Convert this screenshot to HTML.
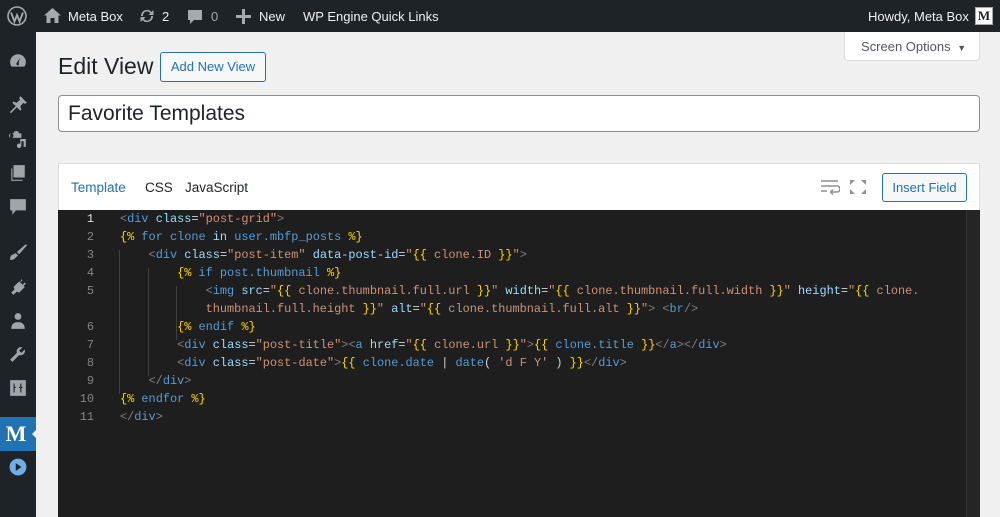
<!DOCTYPE html>
<html><head><meta charset="utf-8"><style>
*{margin:0;padding:0;box-sizing:border-box}
body{width:1000px;height:517px;overflow:hidden;background:#f0f0f1;font-family:"Liberation Sans",sans-serif;position:relative}
#bar{position:absolute;left:0;top:0;width:1000px;height:32px;background:#1d2327;color:#f0f0f1;font-size:13px}
#bar span{position:absolute;top:9px;white-space:nowrap}
#side{position:absolute;left:0;top:32px;width:36px;height:485px;background:#1d2327}
.ic{position:absolute;left:9px;width:18px;height:18px;fill:#a0a5aa}
.ab{position:absolute}
#code{position:absolute;left:58px;top:210px;width:908px;height:307px;background:#1e1e1e;font-family:"Liberation Mono",monospace;font-size:11.9px;color:#d4d4d4}
.ln{position:absolute;left:0;width:36px;text-align:right;color:#858585}
.l{position:absolute;left:62px;white-space:pre}
.g{color:#808080}.t{color:#569cd6}.a{color:#9cdcfe}.s{color:#ce9178}.y{color:#ffd700}.k{color:#569cd6}.w{color:#d4d4d4}
.gd{position:absolute;width:1px;background:#404040}
</style></head><body>
<div id="bar">
<svg class="ab" style="left:7px;top:6px" width="20" height="20" viewBox="0 0 20 20"><circle cx="10" cy="10" r="9" fill="none" stroke="#a7aaad" stroke-width="1.6"/><path d="M4 6.5 L7.5 15.5 L10 9 L12.5 15.5 L16 6.5" fill="none" stroke="#a7aaad" stroke-width="1.8"/></svg>
<svg class="ab" style="left:44px;top:8px" width="17" height="15" viewBox="0 0 17 15"><path d="M8.5 0 L17 7.5 H14.5 V15 H10.5 V10 H6.5 V15 H2.5 V7.5 H0 Z" fill="#a7aaad"/></svg>
<span style="left:68px">Meta Box</span>
<svg class="ab" style="left:138px;top:8px" width="18" height="16" viewBox="0 0 18 16"><path d="M3 8a6 6 0 0 1 10.5-4L15.5 2V7H10.5L12.3 5.2A4 4 0 0 0 5 8Z M15 8a6 6 0 0 1-10.5 4L2.5 14V9H7.5L5.7 10.8A4 4 0 0 0 13 8Z" fill="#a7aaad"/></svg>
<span style="left:162px">2</span>
<svg class="ab" style="left:187px;top:9px" width="16" height="16" viewBox="0 0 16 16"><path d="M1 1H15V11H7L3 15V11H1Z" fill="#a7aaad"/></svg>
<span style="left:211px;color:#a7aaad">0</span>
<svg class="ab" style="left:236px;top:9px" width="15" height="15" viewBox="0 0 15 15"><path d="M6 0H9V6H15V9H9V15H6V9H0V6H6Z" fill="#a7aaad"/></svg>
<span style="left:259px">New</span>
<span style="left:303px">WP Engine Quick Links</span>
<span style="left:868px">Howdy, Meta Box</span>
<div class="ab" style="left:975px;top:7px;width:18px;height:18px;border:1px solid #a7aaad;background:#fff;color:#1d2327;font:bold 13px 'Liberation Serif',serif;text-align:center;line-height:16px">M</div>
</div>
<div id="side">
<svg class="ic" style="top:20px" viewBox="0 0 16 16"><path d="M8 2A7 7 0 0 0 1 9c0 1.5.5 3 1.3 4H13.7A7 7 0 0 0 15 9 7 7 0 0 0 8 2Zm0 10a1.5 1.5 0 0 1-1-2.6L10 5l-1.5 4.6A1.5 1.5 0 0 1 8 12Z"/></svg>
<svg class="ic" style="top:64px" viewBox="0 0 16 16"><path d="M10 0l6 6-2 1-1-1-3 3 1 3-1 1-3-3-5 5H1v-1l5-5-3-3 1-1 3 1 3-3-1-1z"/></svg>
<svg class="ic" style="top:98px" viewBox="0 0 16 16"><path d="M1 3h3l1-2h3l1 2h2v4H1zM4 5a2 2 0 1 0 0 .1zM10 8h5v7h-2V10h-2v4a2 2 0 1 1-1-1.7z"/></svg>
<svg class="ic" style="top:132px" viewBox="0 0 16 16"><path d="M4 1h10v11H4zM2 4h1v10h9v1H2z"/></svg>
<svg class="ic" style="top:166px" viewBox="0 0 16 16"><path d="M1 1h14v10H6l-3 4v-4H1z"/></svg>
<svg class="ic" style="top:211px" viewBox="0 0 16 16"><path d="M15 1l-8 7 2 2 7-8zM6 9l2 2-3 3c-1 1-3 1-4 1 0-1 0-3 1-4z"/></svg>
<svg class="ic" style="top:246px" viewBox="0 0 16 16"><path d="M11 1l1 1-2 2 2 2 2-2 1 1-2 2 1 1-5 5-2-1-3 3-2-2 3-3-1-2 5-5 1 1z"/></svg>
<svg class="ic" style="top:280px" viewBox="0 0 16 16"><circle cx="8" cy="4" r="3"/><path d="M2 15c0-4 2-6 6-6s6 2 6 6z"/></svg>
<svg class="ic" style="top:313px" viewBox="0 0 16 16"><path d="M14 4l-3 3-2-2 3-3a4 4 0 0 0-5 5L1 13l2 2 6-6a4 4 0 0 0 5-5z"/></svg>
<svg class="ic" style="top:347px" viewBox="0 0 16 16"><path d="M1 1h14v14H1zM4 4v8h1V8h1V7H5V4zm6 0v3H9v1h1v4h1V8h1V7h-1V4z" fill-rule="evenodd"/></svg>
<div class="ab" style="left:0;top:385px;width:36px;height:34px;background:#2271b1;color:#fff;font:bold 22px 'Liberation Serif',serif;text-align:center;line-height:34px;padding-right:4px">M</div>
<div class="ab" style="left:32px;top:396px;width:0;height:0;border:6px solid transparent;border-right-color:#f0f0f1;border-left:0"></div>
<svg class="ic" style="top:426px" viewBox="0 0 16 16"><circle cx="8" cy="8" r="7.5" fill="#72aee6"/><path d="M6 4.5v7l5-3.5z" fill="#1d2327"/></svg>
</div>
<div class="ab" style="left:844px;top:32px;width:136px;height:29px;background:#fff;border:1px solid #dcdcde;border-top:0;border-radius:0 0 4px 4px;color:#50575e;font-size:13px;padding:7px 0 0 16px">Screen Options <span style="font-size:9px;margin-left:3px">▼</span></div>
<div class="ab" style="left:58px;top:53px;font-size:23px;color:#1d2327">Edit View</div>
<div class="ab" style="left:160px;top:52px;width:106px;height:30px;border:1px solid #2271b1;border-radius:3px;background:#f6f7f7;color:#2271b1;font-size:13px;text-align:center;line-height:28px">Add New View</div>
<div class="ab" style="left:58px;top:95px;width:922px;height:37px;border:1px solid #8c8f94;border-radius:4px;background:#fff;font-size:21px;color:#1d2327;padding:6px 0 0 9px">Favorite Templates</div>
<div class="ab" style="left:58px;top:163px;width:922px;height:354px;background:#fff;border:1px solid #dcdcde"></div>
<div class="ab" style="left:71px;top:180px;font-size:13.5px;color:#2271b1">Template</div>
<div class="ab" style="left:145px;top:180px;font-size:13.5px;color:#1d2327">CSS</div>
<div class="ab" style="left:185px;top:180px;font-size:13.5px;color:#1d2327">JavaScript</div>
<svg class="ab" style="left:820px;top:179px" width="20" height="16" viewBox="0 0 20 16"><path d="M1 2H18M1 7H17a3 3 0 0 1 0 6H11M1 12H7" fill="none" stroke="#8c8f94" stroke-width="1.6"/><path d="M13 10.5 10.5 13 13 15.5" fill="none" stroke="#8c8f94" stroke-width="1.4"/></svg>
<svg class="ab" style="left:849px;top:179px" width="18" height="16" viewBox="0 0 18 16"><path d="M1 1h5L1 6zM17 1h-5l5 5zM1 15h5L1 10zM17 15h-5l5-5z" fill="#8c8f94"/></svg>
<div class="ab" style="left:882px;top:173px;width:85px;height:29px;border:1px solid #2271b1;border-radius:3px;background:#f6f7f7;color:#2271b1;font-size:13px;text-align:center;line-height:27px">Insert Field</div>
<div class="ab" style="left:966px;top:210px;width:14px;height:307px;background:#252526;border-left:1px solid #333"></div>
<div id="code">
<div class="gd" style="left:61px;top:40px;height:144px"></div>
<div class="gd" style="left:90px;top:58px;height:108px"></div>
<div class="gd" style="left:118px;top:76px;height:54px"></div>
<div class="ln" style="top:2px;color:#e0e0e0">1</div><div class="ln" style="top:20px">2</div><div class="ln" style="top:38px">3</div><div class="ln" style="top:56px">4</div><div class="ln" style="top:74px">5</div><div class="ln" style="top:110px">6</div><div class="ln" style="top:128px">7</div><div class="ln" style="top:146px">8</div><div class="ln" style="top:164px">9</div><div class="ln" style="top:182px">10</div><div class="ln" style="top:200px">11</div>
<div class="l" style="top:2px"><span class="g">&lt;</span><span class="t">div</span> <span class="a">class</span>=<span class="s">"post-grid"</span><span class="g">&gt;</span></div>
<div class="l" style="top:20px"><span class="y">{%</span> <span class="k">for clone</span> <span class="a">in</span> <span class="k">user.mbfp_posts</span> <span class="y">%}</span></div>
<div class="l" style="top:38px">    <span class="g">&lt;</span><span class="t">div</span> <span class="a">class</span>=<span class="s">"post-item"</span> <span class="a">data-post-id</span>=<span class="s">"<span class="y">{{</span> clone.ID <span class="y">}}</span>"</span><span class="g">&gt;</span></div>
<div class="l" style="top:56px">        <span class="y">{%</span> <span class="k">if post.thumbnail</span> <span class="y">%}</span></div>
<div class="l" style="top:74px">            <span class="g">&lt;</span><span class="t">img</span> <span class="a">src</span>=<span class="s">"<span class="y">{{</span> clone.thumbnail.full.url <span class="y">}}</span>"</span> <span class="a">width</span>=<span class="s">"<span class="y">{{</span> clone.thumbnail.full.width <span class="y">}}</span>"</span> <span class="a">height</span>=<span class="s">"<span class="y">{{</span> clone.</span></div>
<div class="l" style="top:92px">            <span class="s">thumbnail.full.height <span class="y">}}</span>"</span> <span class="a">alt</span>=<span class="s">"<span class="y">{{</span> clone.thumbnail.full.alt <span class="y">}}</span>"</span><span class="g">&gt;</span> <span class="g">&lt;</span><span class="t">br</span><span class="g">/&gt;</span></div>
<div class="l" style="top:110px">        <span class="y">{%</span> <span class="k">endif</span> <span class="y">%}</span></div>
<div class="l" style="top:128px">        <span class="g">&lt;</span><span class="t">div</span> <span class="a">class</span>=<span class="s">"post-title"</span><span class="g">&gt;&lt;</span><span class="t">a</span> <span class="a">href</span>=<span class="s">"<span class="y">{{</span> clone.url <span class="y">}}</span>"</span><span class="g">&gt;</span><span class="y">{{</span> <span class="k">clone.title</span> <span class="y">}}</span><span class="g">&lt;/</span><span class="t">a</span><span class="g">&gt;&lt;/</span><span class="t">div</span><span class="g">&gt;</span></div>
<div class="l" style="top:146px">        <span class="g">&lt;</span><span class="t">div</span> <span class="a">class</span>=<span class="s">"post-date"</span><span class="g">&gt;</span><span class="y">{{</span> <span class="k">clone.date</span> <span class="w">|</span> <span class="k">date</span><span class="w">(</span> <span class="s">'d F Y'</span> <span class="w">)</span> <span class="y">}}</span><span class="g">&lt;/</span><span class="t">div</span><span class="g">&gt;</span></div>
<div class="l" style="top:164px">    <span class="g">&lt;/</span><span class="t">div</span><span class="g">&gt;</span></div>
<div class="l" style="top:182px"><span class="y">{%</span> <span class="k">endfor</span> <span class="y">%}</span></div>
<div class="l" style="top:200px"><span class="g">&lt;/</span><span class="t">div</span><span class="g">&gt;</span></div>
</div>
</body></html>
